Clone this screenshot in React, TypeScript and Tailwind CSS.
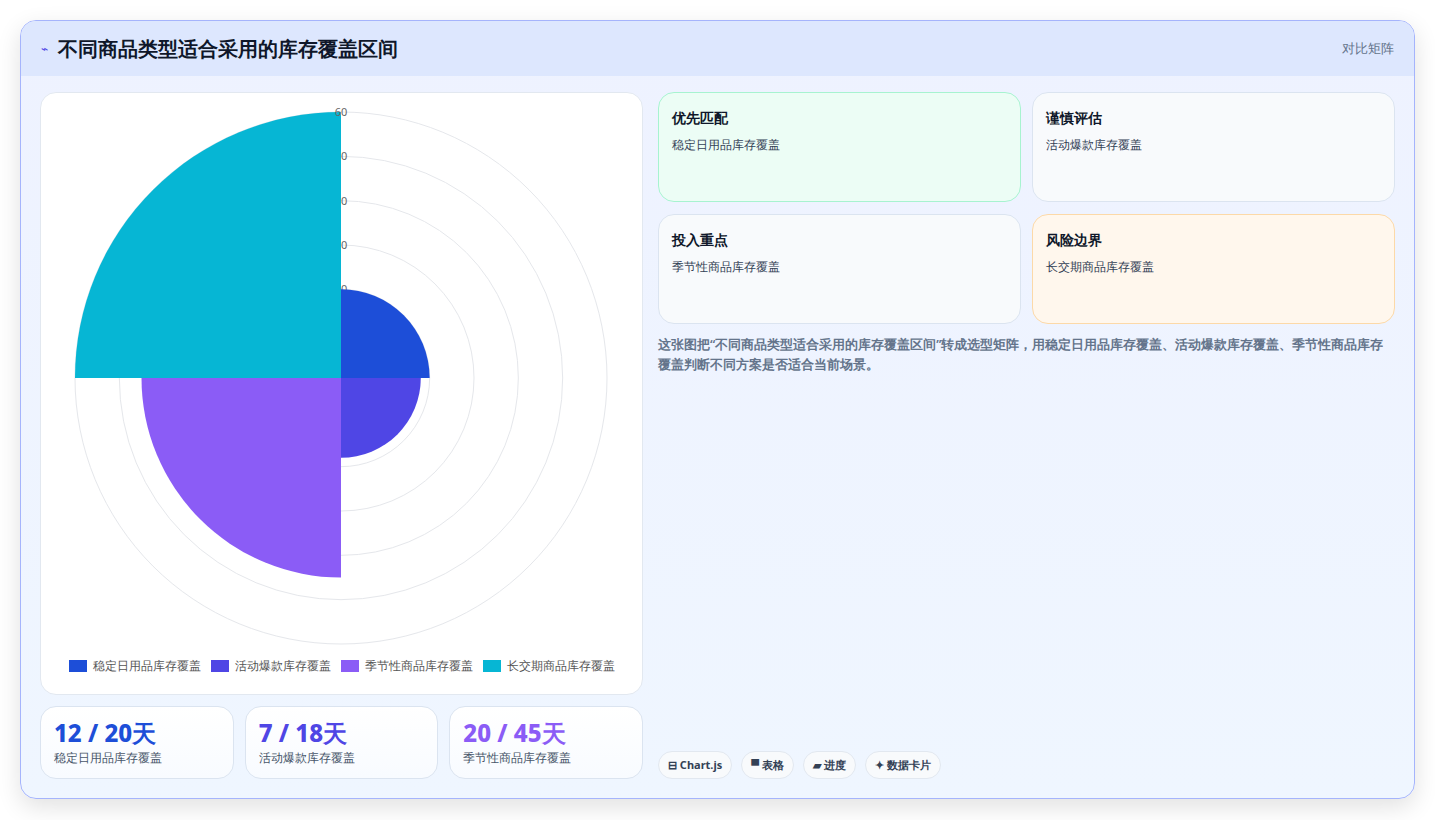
import React from 'react';

const cx = 299, cy = 285;
const unit = 266 / 60;

const wedge = (r: number, a0: number, a1: number) => {
  const p = (a: number) => [cx + r * Math.cos(a), cy + r * Math.sin(a)];
  const [x0, y0] = p(a0);
  const [x1, y1] = p(a1);
  return `M${cx} ${cy} L${x0} ${y0} A${r} ${r} 0 0 1 ${x1} ${y1} Z`;
};

const H = Math.PI / 2;
const data = [
  { label: '稳定日用品库存覆盖', v: 20, color: '#1d4ed8', a0: -H, a1: 0 },
  { label: '活动爆款库存覆盖', v: 18, color: '#4f46e5', a0: 0, a1: H },
  { label: '季节性商品库存覆盖', v: 45, color: '#8b5cf6', a0: H, a1: 2 * H },
  { label: '长交期商品库存覆盖', v: 60, color: '#06b6d4', a0: 2 * H, a1: 3 * H },
];

const cards = [
  { t: '优先匹配', d: '稳定日用品库存覆盖', c: 'bg-[#ecfdf5] border-[#a7f3d0]' },
  { t: '谨慎评估', d: '活动爆款库存覆盖', c: 'bg-[#f8fafc] border-[#dbe4f0]' },
  { t: '投入重点', d: '季节性商品库存覆盖', c: 'bg-[#f8fafc] border-[#dbe4f0]' },
  { t: '风险边界', d: '长交期商品库存覆盖', c: 'bg-[#fff7ed] border-[#fcd9a8]' },
];

const stats = [
  { v: '12 / 20天', l: '稳定日用品库存覆盖', c: 'text-[#1d4ed8]' },
  { v: '7 / 18天', l: '活动爆款库存覆盖', c: 'text-[#4f46e5]' },
  { v: '20 / 45天', l: '季节性商品库存覆盖', c: 'text-[#8b5cf6]' },
];

export default function App() {
  return (
    <div className="min-h-[820px] bg-white p-5 font-['Noto_Sans_CJK_SC','Noto_Sans',sans-serif]">
      <div className="h-[779px] rounded-2xl border border-[#a5b4fc] bg-gradient-to-b from-[#eef2ff] to-[#eff6ff] shadow-[0_8px_24px_rgba(0,0,0,0.12)] overflow-hidden flex flex-col">
        <div className="h-[56px] flex items-center justify-between px-5 bg-[#dde7fe]">
          <div className="flex items-center gap-[10px]">
            <span className="text-[#4f46e5] text-xs">⌁</span>
            <span className="text-[20px] font-black text-[#0f172a]">不同商品类型适合采用的库存覆盖区间</span>
          </div>
          <span className="text-[13px] text-[#64748b] font-medium">对比矩阵</span>
        </div>
        <div className="flex-1 flex gap-[15px] px-[19px] pt-4 pb-[19px]">
          <div className="w-[603px] flex flex-col gap-[11px]">
            <div className="h-[603px] rounded-2xl border border-[#e2e8f0] bg-white flex flex-col items-center">
              <svg width="600" height="560" className="shrink-0">
                {[1, 2, 3, 4, 5, 6].map((i) => (
                  <circle key={i} cx={cx} cy={cy} r={i * 10 * unit} fill="none" stroke="#e5e7eb" strokeWidth="1" />
                ))}
                {[1, 2, 3, 4, 5].map((i) => (
                  <text key={i} x={cx} y={cy - i * 10 * unit + 4} fontSize="11" fill="#666" textAnchor="middle">{i * 10}</text>
                ))}
                {data.map((d) => (
                  <path key={d.label} d={wedge(d.v * unit, d.a0, d.a1)} fill={d.color} />
                ))}
                <text x={cx} y={cy - 60 * unit + 4} fontSize="11" fill="#666" textAnchor="middle">60</text>
              </svg>
              <div className="flex gap-[10px] mt-[4px] text-[12px] font-medium text-[#555]">
                {data.map((d) => (
                  <div key={d.label} className="flex items-center gap-[6px]">
                    <span className="w-[18px] h-[12px]" style={{ background: d.color }} />
                    {d.label}
                  </div>
                ))}
              </div>
            </div>
            <div className="grid grid-cols-3 gap-[11px]">
              {stats.map((s) => (
                <div key={s.l} className="h-[73px] rounded-2xl border border-[#dbe4f0] bg-gradient-to-b from-white to-[#f8fbff] px-[13px] pt-[11px]">
                  <div className={`text-[24px] font-extrabold leading-[30px] ${s.c}`}>{s.v}</div>
                  <div className="text-[12px] font-medium text-[#475569] mt-[1px]">{s.l}</div>
                </div>
              ))}
            </div>
          </div>
          <div className="flex-1 flex flex-col">
            <div className="grid grid-cols-2 gap-x-[11px] gap-y-[12px]">
              {cards.map((c) => (
                <div key={c.t} className={`h-[110px] rounded-2xl border px-[13px] pt-[14px] ${c.c}`}>
                  <div className="text-[14px] font-bold text-[#0f172a]">{c.t}</div>
                  <div className="text-[12px] font-medium text-[#334155] mt-[8px]">{c.d}</div>
                </div>
              ))}
            </div>
            <p className="mt-[11px] pr-1 text-[12.5px] leading-[20px] text-[#64748b] font-semibold">
              这张图把“不同商品类型适合采用的库存覆盖区间”转成选型矩阵，用稳定日用品库存覆盖、活动爆款库存覆盖、季节性商品库存覆盖判断不同方案是否适合当前场景。
            </p>
            <div className="mt-auto flex gap-[9px]">
              {['⊟ Chart.js', '▀ 表格', '▰ 进度', '✦ 数据卡片'].map((t) => (
                <span key={t} className="h-[28px] px-[9px] rounded-full border border-[#e2e8f0] bg-[#f8fafc] text-[11px] font-bold text-[#334155] flex items-center">{t}</span>
              ))}
            </div>
          </div>
        </div>
      </div>
    </div>
  );
}
